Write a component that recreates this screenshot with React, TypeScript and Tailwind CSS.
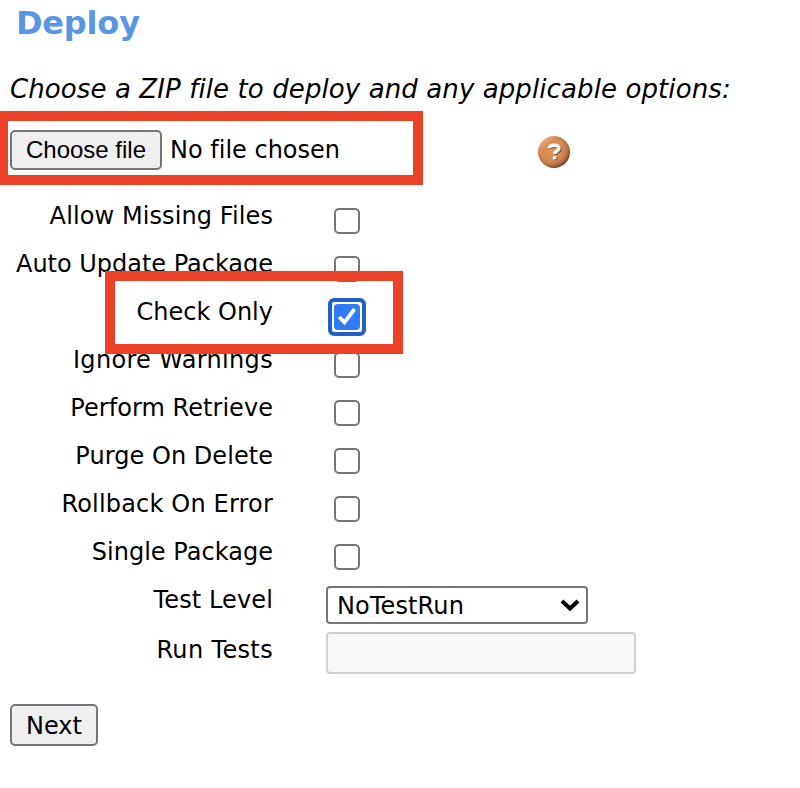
type Option = { label: string; spacing: string; checked?: boolean };

const options: Option[] = [
  { label: "Allow Missing Files", spacing: "tracking-[0.1px]" },
  { label: "Auto Update Package", spacing: "tracking-[-0.02px]" },
  { label: "Check Only", spacing: "tracking-[0px]", checked: true },
  { label: "Ignore Warnings", spacing: "tracking-[0.33px]" },
  { label: "Perform Retrieve", spacing: "tracking-[0.05px]" },
  { label: "Purge On Delete", spacing: "tracking-[0.05px]" },
  { label: "Rollback On Error", spacing: "tracking-[0.18px]" },
  { label: "Single Package", spacing: "tracking-[0.03px]" },
];

function Label({ text, spacing }: { text: string; spacing: string }) {
  return (
    <div className="flex w-[273px] shrink-0 justify-end">
      <span className={`whitespace-nowrap ${spacing}`}>{text}</span>
    </div>
  );
}

function CheckBox({ checked }: { checked?: boolean }) {
  if (checked) {
    return (
      <div className="-mt-1.5 -ml-1.5 size-[38px] rounded-[6px] border-4 border-[#2160c4] bg-white p-0.5">
        <div className="size-[26px] rounded-[4px] bg-[#2f7bf6]">
          <svg viewBox="0 0 26 26" className="size-[26px]" fill="none" stroke="white" strokeWidth="3.8">
            <path d="M5.2 13 L10.5 18.4 L20.6 5" />
          </svg>
        </div>
      </div>
    );
  }
  return <div className="size-[26px] rounded-[5px] border-2 border-[#767676] bg-white" />;
}

function HelpIcon() {
  return (
    <svg viewBox="0 0 32 32" className="size-8">
      <defs>
        <radialGradient id="ball" cx="0.42" cy="0.4" r="0.62">
          <stop offset="0" stopColor="#df9560" />
          <stop offset="0.6" stopColor="#d58a56" />
          <stop offset="0.82" stopColor="#b87142" />
          <stop offset="1" stopColor="#6e4023" />
        </radialGradient>
        <linearGradient id="shine" x1="0" y1="0" x2="0.6" y2="0.8">
          <stop offset="0" stopColor="#ffe3cd" stopOpacity="0.8" />
          <stop offset="0.4" stopColor="#ffe3cd" stopOpacity="0" />
        </linearGradient>
      </defs>
      <circle cx="16" cy="16" r="16" fill="url(#ball)" />
      <circle cx="16" cy="16" r="16" fill="url(#shine)" />
      <g fill="none" strokeWidth="3.4">
        <path d="M12.4 13 C13.2 9 23 9.4 22.2 13.4 C21.6 16.2 18.2 15.8 18 18.8 M18 21.2 V24.2" stroke="#8f5836" />
        <path d="M11.2 12 C12 8 21.8 8.4 21 12.4 C20.4 15.2 16.8 14.8 16.6 17.8 M16.6 20.2 V23.2" stroke="#fff" />
      </g>
    </svg>
  );
}

export default function App() {
  return (
    <main className="relative h-[788px] w-[800px] overflow-hidden bg-white font-['DejaVu_Sans',sans-serif] text-2xl text-black [font-variant-ligatures:none]">
      <h1 className="h-[46px] pl-[16px] text-[32px] leading-[46px] font-bold tracking-[-0.2px] text-[#5896e2]">Deploy</h1>
      <p className="mt-[19px] h-12 pl-[10px] text-[26px] leading-[48px] whitespace-nowrap italic">
        <span className="tracking-[0.1px]">Choose a ZIP file to deploy and any applicable options:</span>
      </p>

      <div className="mt-[17px] flex h-10 items-center pl-[10px]">
        <button className="h-10 w-[152px] shrink-0 rounded-[5px] border-2 border-[#767676] bg-[#efefef] font-['Liberation_Sans',sans-serif] whitespace-nowrap">
          Choose file
        </button>
        <span className="ml-2 w-[368px] whitespace-nowrap">No file chosen</span>
        <div className="mt-1">
          <HelpIcon />
        </div>
      </div>

      <div className="mt-[22px]">
        {options.map((o) => (
          <div key={o.label} className="flex h-12 leading-[48px]">
            <Label text={o.label} spacing={o.spacing} />
            <div className="ml-[61px] pt-4">
              <CheckBox checked={o.checked} />
            </div>
          </div>
        ))}
        <div className="flex h-[50px] leading-[48px]">
          <Label text="Test Level" spacing="tracking-[0.12px]" />
          <div className="mt-[10px] ml-[53px] flex h-[38px] w-[262px] items-center justify-between rounded-[4px] border-2 border-[#767676] bg-white pr-[6px] pl-[9px]">
            <span className="pt-0.5 tracking-[0.12px]">NoTestRun</span>
            <svg viewBox="0 0 20 14" className="h-[14px] w-5" fill="none" stroke="black" strokeWidth="4">
              <path d="M2 3 L10 10.5 L18 3" />
            </svg>
          </div>
        </div>
        <div className="flex h-[50px] leading-[48px]">
          <Label text="Run Tests" spacing="tracking-[0.35px]" />
          <div className="mt-[6px] ml-[53px] h-[42px] w-[310px] rounded-[4px] border-2 border-[#d0d0d0] bg-[#f8f8f8]" />
        </div>
      </div>

      <button className="mt-7 ml-[10px] block h-[42px] w-[88px] rounded-[5px] border-2 border-[#767676] bg-[#efefef] leading-[40px]">
        Next
      </button>

      <div className="absolute top-[111px] -left-[2px] h-[74px] w-[425px] border-[10px] border-[#ec4126]" />
      <div className="absolute top-[271px] left-[105px] h-[83px] w-[298px] border-[10px] border-[#ec4126]" />
    </main>
  );
}
